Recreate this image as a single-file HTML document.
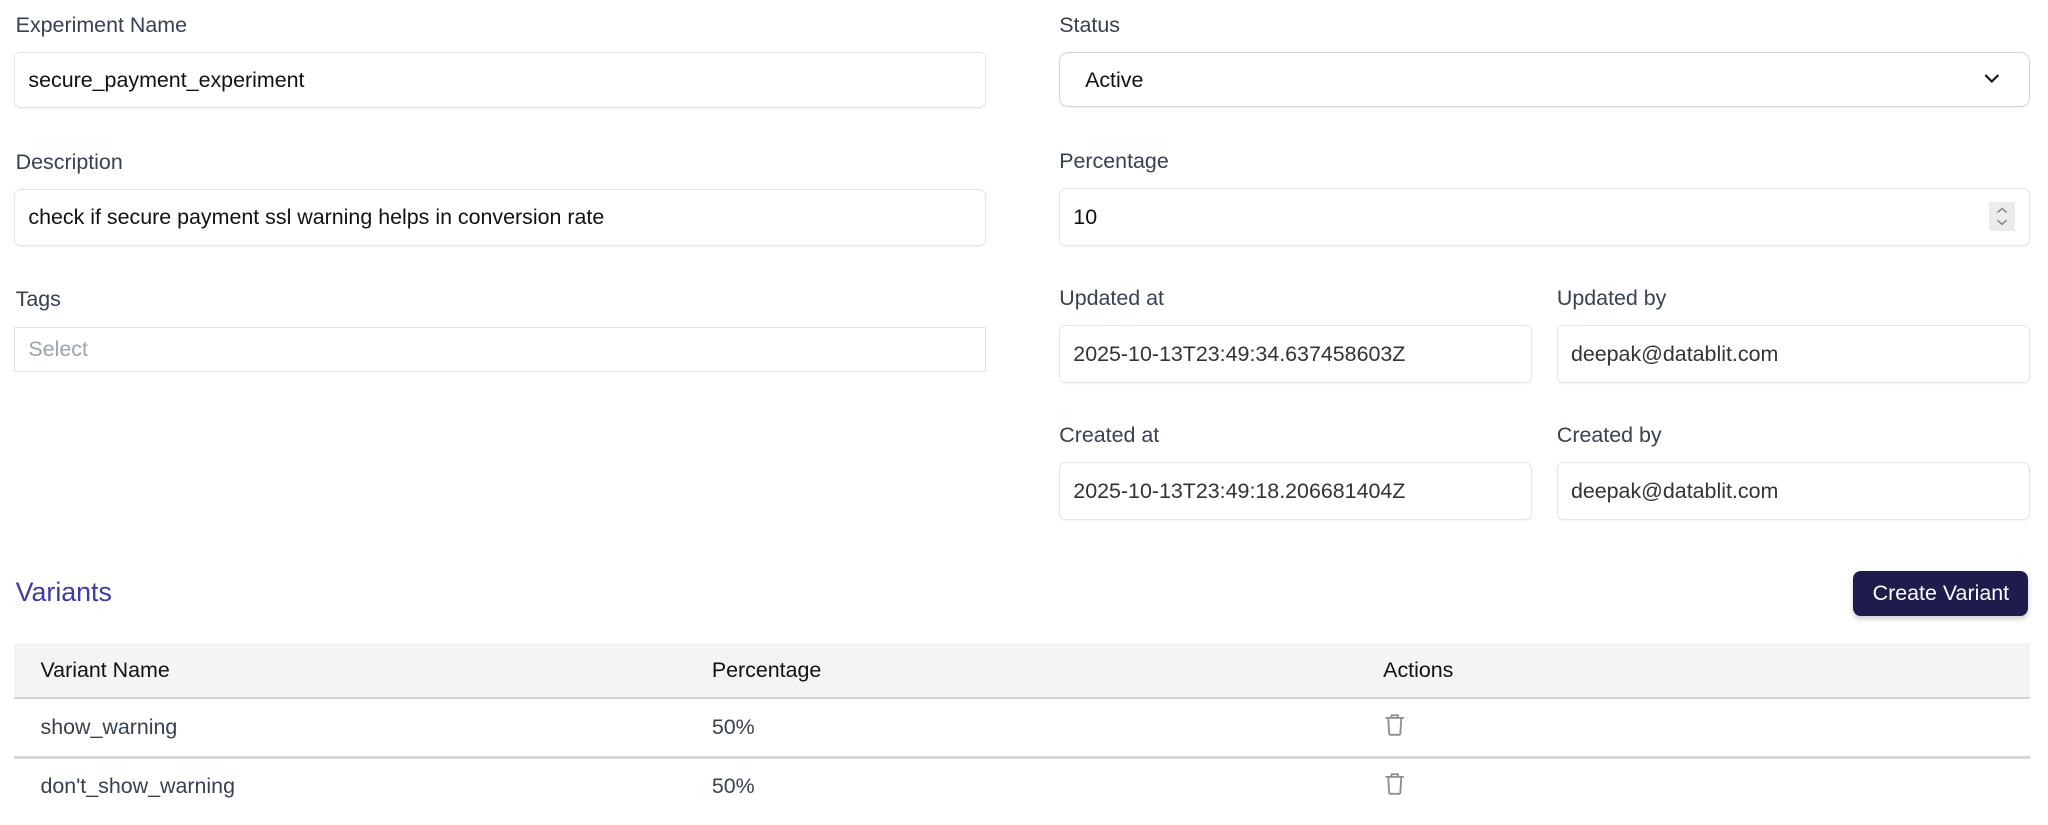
<!DOCTYPE html>
<html><head><style>
html,body{margin:0;padding:0;background:#fff;}
body{width:2048px;height:825px;overflow:hidden;font-family:"Liberation Sans",Arial,sans-serif;}
#w{zoom:1.30612;position:relative;width:1568px;height:632px;}
.l{position:absolute;font-size:16.4px;color:#374151;line-height:20px;}
.i{position:absolute;box-sizing:border-box;border:1px solid #e3e5e8;border-radius:5px;font-size:16.4px;color:#111;line-height:20px;padding-left:10px;padding-top:0px;display:flex;align-items:center;box-shadow:0 1px 1px rgba(0,0,0,0.04);}
.t{position:absolute;font-size:16.4px;color:#111;line-height:20px;}
.r{color:#374151;}
</style></head><body><div id="w">
<div class="l" style="left:12px;top:9px">Experiment Name</div>
<div class="i" style="left:11px;top:40px;width:744px;height:43px">secure_payment_experiment</div>
<div class="l" style="left:12px;top:114px">Description</div>
<div class="i" style="left:11px;top:145px;width:744px;height:43px">check if secure payment ssl warning helps in conversion rate</div>
<div class="l" style="left:12px;top:219px">Tags</div>
<div class="i" style="left:11px;top:250px;width:744px;height:35px;border-radius:0;color:#9ca3af;box-shadow:none;border-color:#e0e0e0">Select</div>

<div class="l" style="left:811px;top:9px">Status</div>
<div class="i" style="left:811px;top:40px;width:743px;height:42px;border-color:#d4d4d4;border-radius:7px;padding-left:19px">Active
<svg style="position:absolute;left:707px;top:15px" width="12" height="8" viewBox="0 0 12 8"><path d="M1 1.5 L6 6.5 L11 1.5" fill="none" stroke="#111" stroke-width="1.6"/></svg></div>
<div class="l" style="left:811px;top:113px">Percentage</div>
<div class="i" style="left:811px;top:144px;width:743px;height:44px">10
<div style="position:absolute;left:711px;top:10px;width:20px;height:22px;background:#ececec"><svg width="20" height="22" viewBox="0 0 20 22"><path d="M6.5 8 L10 5 L13.5 8 M6.5 14 L10 17 L13.5 14" fill="none" stroke="#888" stroke-width="1.2"/></svg></div></div>
<div class="l" style="left:811px;top:218px">Updated at</div>
<div class="i" style="left:811px;top:249px;width:362px;height:44px;color:#333">2025-10-13T23:49:34.637458603Z</div>
<div class="l" style="left:1192px;top:218px">Updated by</div>
<div class="i" style="left:1192px;top:249px;width:362px;height:44px;color:#333">deepak@datablit.com</div>
<div class="l" style="left:811px;top:323px">Created at</div>
<div class="i" style="left:811px;top:354px;width:362px;height:44px;color:#333">2025-10-13T23:49:18.206681404Z</div>
<div class="l" style="left:1192px;top:323px">Created by</div>
<div class="i" style="left:1192px;top:354px;width:362px;height:44px;color:#333">deepak@datablit.com</div>

<div style="position:absolute;left:12px;top:442px;font-size:20.5px;line-height:24px;color:#3b3ba3">Variants</div>
<div style="position:absolute;left:1419px;top:437px;width:134px;height:35px;background:#1e1c4c;border-radius:6px;color:#fff;font-size:16.4px;display:flex;align-items:center;justify-content:center;box-shadow:0 2px 4px rgba(0,0,0,0.2)">Create Variant</div>

<div style="position:absolute;left:11px;top:492px;width:1543px;height:42px;background:#f3f4f6;border-bottom:2px solid #d1d3d6"></div>
<div class="t" style="left:31px;top:503px">Variant Name</div>
<div class="t" style="left:545px;top:503px">Percentage</div>
<div class="t" style="left:1059px;top:503px">Actions</div>
<div style="position:absolute;left:11px;top:579px;width:1543px;height:2px;background:#d6d7da"></div>
<div class="t r" style="left:31px;top:547px">show_warning</div>
<div class="t r" style="left:545px;top:547px">50%</div>
<div class="t r" style="left:31px;top:592px">don't_show_warning</div>
<div class="t r" style="left:545px;top:592px">50%</div>
<svg style="position:absolute;left:1059px;top:545px" width="18" height="19" viewBox="0 0 18 19"><path d="M2 4.5 H16 M6.5 4.5 V2.5 H11.5 V4.5 M4 4.5 L4.7 16.5 Q4.8 17.5 5.8 17.5 H12.2 Q13.2 17.5 13.3 16.5 L14 4.5" fill="none" stroke="#8a8d93" stroke-width="1.4" stroke-linejoin="round"/></svg>
<svg style="position:absolute;left:1059px;top:590px" width="18" height="19" viewBox="0 0 18 19"><path d="M2 4.5 H16 M6.5 4.5 V2.5 H11.5 V4.5 M4 4.5 L4.7 16.5 Q4.8 17.5 5.8 17.5 H12.2 Q13.2 17.5 13.3 16.5 L14 4.5" fill="none" stroke="#8a8d93" stroke-width="1.4" stroke-linejoin="round"/></svg>
</div></body></html>
